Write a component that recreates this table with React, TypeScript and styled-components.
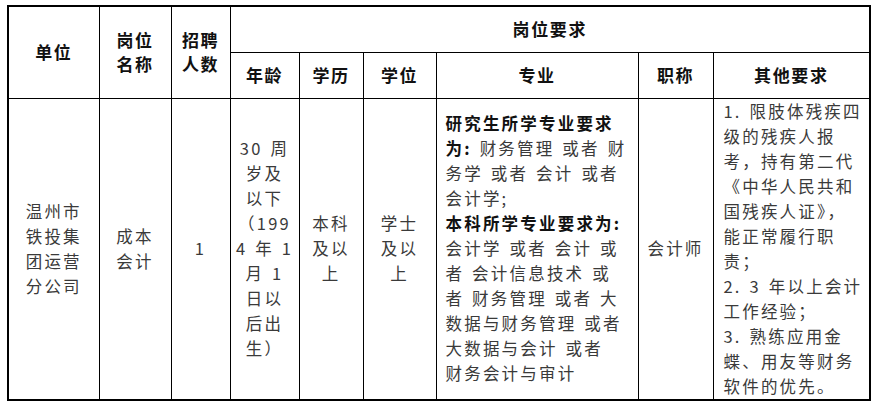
import React from "react";
import styled, { createGlobalStyle } from "styled-components";

const GlobalStyle = createGlobalStyle`
   html, body {
      margin: 0;
      padding: 0;
      background: #fff;
   }
   body {
      font-family: "Noto Sans CJK SC", "Noto Sans", sans-serif;
   }
`;

const widths = [91, 72, 59, 69, 64, 73, 202, 75, 157];

const ageLines = ["30 周", "岁及", "以下", "（199", "4 年 1", "月 1", "日以", "后出", "生）"];

const majorLines: { bold?: string; text?: string }[] = [
   { bold: "研究生所学专业要求" },
   { bold: "为:", text: " 财务管理 或者 财" },
   { text: "务学 或者 会计 或者" },
   { text: "会计学;" },
   { bold: "本科所学专业要求为:" },
   { text: "会计学 或者 会计 或" },
   { text: "者 会计信息技术 或" },
   { text: "者 财务管理 或者 大" },
   { text: "数据与财务管理 或者" },
   { text: "大数据与会计 或者" },
   { text: "财务会计与审计" },
];

const otherLines = [
   "1. 限肢体残疾四",
   "级的残疾人报",
   "考，持有第二代",
   "《中华人民共和",
   "国残疾人证》，",
   "能正常履行职",
   "责；",
   "2. 3 年以上会计",
   "工作经验；",
   "3. 熟练应用金",
   "蝶、用友等财务",
   "软件的优先。",
];

const Lines: React.FC<{ lines: string[] }> = ({ lines }) => (
   <>
      {lines.map((l, i) => (
         <Line key={i}>{l}</Line>
      ))}
   </>
);

export default function App() {
   return (
      <Page>
         <GlobalStyle />
         <Table>
            <colgroup>
               {widths.map((w, i) => (
                  <col key={i} style={{ width: w }} />
               ))}
            </colgroup>
            <thead>
               <HeadRow>
                  <Th rowSpan={2}>单位</Th>
                  <Th rowSpan={2}>
                     <Lines lines={["岗位", "名称"]} />
                  </Th>
                  <Th rowSpan={2}>
                     <Lines lines={["招聘", "人数"]} />
                  </Th>
                  <Th colSpan={6}>岗位要求</Th>
               </HeadRow>
               <HeadRow>
                  <Th>年龄</Th>
                  <Th>学历</Th>
                  <Th>学位</Th>
                  <Th>专业</Th>
                  <Th>职称</Th>
                  <Th>其他要求</Th>
               </HeadRow>
            </thead>
            <tbody>
               <BodyRow>
                  <Td>
                     <Lines lines={["温州市", "铁投集", "团运营", "分公司"]} />
                  </Td>
                  <Td>
                     <Lines lines={["成本", "会计"]} />
                  </Td>
                  <Td>1</Td>
                  <Td>
                     <Lines lines={ageLines} />
                  </Td>
                  <Td>
                     <Lines lines={["本科", "及以", "上"]} />
                  </Td>
                  <Td>
                     <Lines lines={["学士", "及以", "上"]} />
                  </Td>
                  <Td $align="left" $pad={9}>
                     {majorLines.map((l, i) => (
                        <Line key={i}>
                           {l.bold && <Strong>{l.bold}</Strong>}
                           {l.text}
                        </Line>
                     ))}
                  </Td>
                  <Td>会计师</Td>
                  <Td $align="left" $pad={10}>
                     <Lines lines={otherLines} />
                  </Td>
               </BodyRow>
            </tbody>
         </Table>
      </Page>
   );
}

const Page = styled.div`
   padding: 5px 0 0 7px;
`;

const Table = styled.table`
   width: 862px;
   table-layout: fixed;
   border-collapse: collapse;
   border: 2px solid #000;
`;

const HeadRow = styled.tr`
   height: 46px;
`;

const BodyRow = styled.tr`
   height: 301px;
`;

const Th = styled.th`
   border: 1px solid #000;
   padding: 0;
   text-align: center;
   vertical-align: middle;
   font-size: 17px;
   font-weight: 700;
   letter-spacing: 1.6px;
   line-height: 24px;
   color: #111;
`;

const Td = styled.td<{ $align?: "left" | "center"; $pad?: number }>`
   border: 1px solid #000;
   padding: 0 0 0 ${(p) => p.$pad ?? 0}px;
   text-align: ${(p) => p.$align ?? "center"};
   vertical-align: middle;
   font-size: 16.5px;
   font-weight: 400;
   letter-spacing: 2.2px;
   word-spacing: 2px;
   line-height: 25px;
   color: #3a3a3a;
`;

const Line = styled.div`
   white-space: nowrap;
`;

const Strong = styled.strong`
   font-weight: 700;
   color: #111;
`;
